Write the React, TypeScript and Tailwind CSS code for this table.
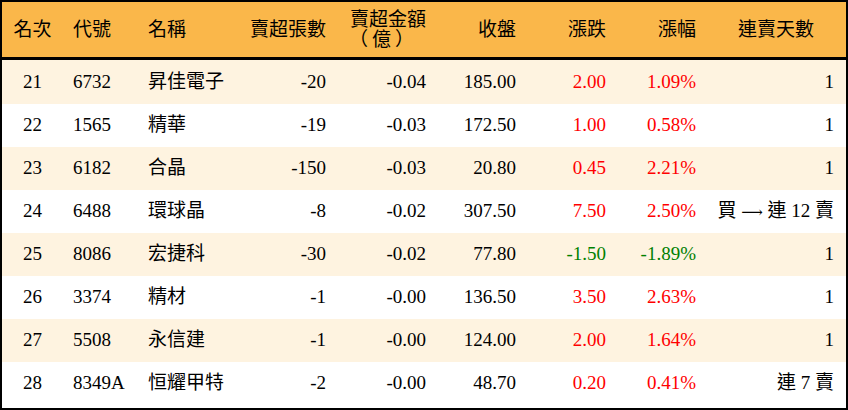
import React from "react";

type Row = {
  rank: string;
  code: string;
  name: string;
  qty: string;
  amt: string;
  close: string;
  chg: string;
  pct: string;
  days: React.ReactNode;
  up: boolean;
};

const rows: Row[] = [
  { rank: "21", code: "6732", name: "昇佳電子", qty: "-20", amt: "-0.04", close: "185.00", chg: "2.00", pct: "1.09%", days: "1", up: true },
  { rank: "22", code: "1565", name: "精華", qty: "-19", amt: "-0.03", close: "172.50", chg: "1.00", pct: "0.58%", days: "1", up: true },
  { rank: "23", code: "6182", name: "合晶", qty: "-150", amt: "-0.03", close: "20.80", chg: "0.45", pct: "2.21%", days: "1", up: true },
  {
    rank: "24",
    code: "6488",
    name: "環球晶",
    qty: "-8",
    amt: "-0.02",
    close: "307.50",
    chg: "7.50",
    pct: "2.50%",
    days: (
      <>
        買 <span className="font-['DejaVu_Serif',serif] text-[15px]">⟶</span> 連 12 賣
      </>
    ),
    up: true,
  },
  { rank: "25", code: "8086", name: "宏捷科", qty: "-30", amt: "-0.02", close: "77.80", chg: "-1.50", pct: "-1.89%", days: "1", up: false },
  { rank: "26", code: "3374", name: "精材", qty: "-1", amt: "-0.00", close: "136.50", chg: "3.50", pct: "2.63%", days: "1", up: true },
  { rank: "27", code: "5508", name: "永信建", qty: "-1", amt: "-0.00", close: "124.00", chg: "2.00", pct: "1.64%", days: "1", up: true },
  { rank: "28", code: "8349A", name: "恒耀甲特", qty: "-2", amt: "-0.00", close: "48.70", chg: "0.20", pct: "0.41%", days: "連 7 賣", up: true },
];

const grid =
  "grid grid-cols-[61px_75px_102px_96px_100px_90px_90px_90px_140px]";

export default function App() {
  return (
    <div className="w-[848px] h-[410px] bg-white font-['Liberation_Serif','Noto_Sans_CJK_TC',serif] text-[19px] text-black">
      <div className="border-2 border-black w-[848px] h-[410px] overflow-hidden">
        <div className={`${grid} h-[58px] bg-[#FAB74A] border-b-[3px] border-black items-center leading-[20px]`}>
          <div className="text-center">名次</div>
          <div className="pl-[10px]">代號</div>
          <div className="pl-[10px]">名稱</div>
          <div className="text-right pr-[10px]">賣超張數</div>
          <div className="text-right pr-[10px] flex flex-col items-end">
            <span>賣超金額</span>
            <span className="pr-[8px] tracking-[4px]">（億）</span>
          </div>
          <div className="text-right pr-[10px]">收盤</div>
          <div className="text-right pr-[10px]">漲跌</div>
          <div className="text-right pr-[10px]">漲幅</div>
          <div className="text-center">連賣天數</div>
        </div>
        {rows.map((r, i) => {
          const color = r.up ? "text-[#FF0000]" : "text-[#008000]";
          return (
            <div
              key={r.rank}
              className={`${grid} ${i === 0 ? "h-[44px]" : "h-[43px]"} items-center ${
                i % 2 === 0 ? "bg-[#FEF3E0]" : "bg-white"
              }`}
            >
              <div className="text-center">{r.rank}</div>
              <div className="pl-[10px]">{r.code}</div>
              <div className="pl-[10px] whitespace-nowrap">{r.name}</div>
              <div className="text-right pr-[10px]">{r.qty}</div>
              <div className="text-right pr-[10px]">{r.amt}</div>
              <div className="text-right pr-[10px]">{r.close}</div>
              <div className={`text-right pr-[10px] ${color}`}>{r.chg}</div>
              <div className={`text-right pr-[10px] ${color}`}>{r.pct}</div>
              <div className="text-right pr-[12px] whitespace-pre">{r.days}</div>
            </div>
          );
        })}
      </div>
    </div>
  );
}
